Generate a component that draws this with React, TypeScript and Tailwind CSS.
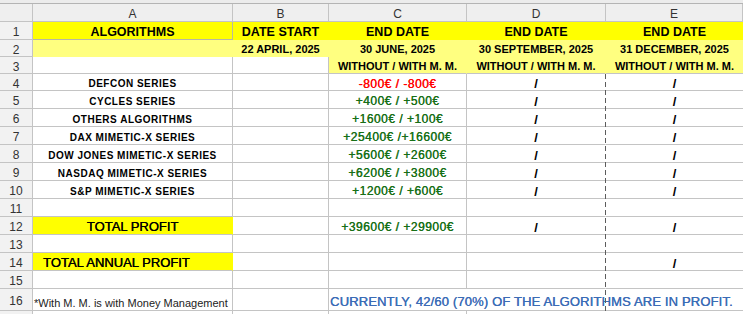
import React from "react";

type Algo = { name: string; value: string; loss?: boolean };

const algos: Algo[] = [
  { name: "DEFCON SERIES", value: "-800€ / -800€", loss: true },
  { name: "CYCLES SERIES", value: "+400€ / +500€" },
  { name: "OTHERS ALGORITHMS", value: "+1600€ / +100€" },
  { name: "DAX MIMETIC-X SERIES", value: "+25400€ /+16600€" },
  { name: "DOW JONES MIMETIC-X SERIES", value: "+5600€ / +2600€" },
  { name: "NASDAQ MIMETIC-X SERIES", value: "+6200€ / +3800€" },
  { name: "S&P MIMETIC-X SERIES", value: "+1200€ / +600€" },
];

function RowNum({ n, h }: { n: number; h: string }) {
  return (
    <div className={`${h} flex items-center justify-center border-r border-b border-[#c4c4c4] bg-[#f2f2f2] pt-[3px] text-[12px] text-[#333]`}>
      {n}
    </div>
  );
}

function Cell({ h, className = "", children }: { h: string; className?: string; children?: React.ReactNode }) {
  return <div className={`${h} flex items-center justify-center pt-[3px] ${className}`}>{children}</div>;
}

function Slash() {
  return <span className="text-[13px] font-bold leading-none text-black">/</span>;
}

const grid = "border-r border-b border-[#c4c4c4]";
const gridD = "border-r border-b border-[#c4c4c4] border-r-transparent";
const money = "text-[12px] tracking-[0.5px] [text-shadow:0.35px_0_0_currentColor]";

export default function App() {
  return (
    <div className="relative h-[314px] w-[743px] overflow-hidden bg-white font-['Liberation_Sans',Arial,sans-serif] text-black">
      <div className="h-[4px] border-b border-[#b4b4b4] bg-[#ececec]" />

      <div className="grid grid-cols-[33px_200px_96px_138px_139px_1fr]">
        {/* column letters */}
        <div className="h-[18px] border-r border-b border-[#c4c4c4] bg-[#efefef]" />
        {["A", "B", "C", "D", "E"].map((c) => (
          <div key={c} className="flex h-[18px] items-center justify-center border-r border-b border-[#c4c4c4] bg-[#efefef] pt-[3px] text-[12px] text-[#333]">
            {c}
          </div>
        ))}

        {/* row 1 */}
        <RowNum n={1} h="h-[18px]" />
        <Cell h="h-[18px]" className="border-r border-b border-[#b8b8a0] bg-[#ffff00] text-[12.5px] font-bold">ALGORITHMS</Cell>
        <Cell h="h-[18px]" className="border-r border-b border-[#ffff00] bg-[#ffff00] text-[12.5px] font-bold">DATE START</Cell>
        <Cell h="h-[18px]" className="border-r border-b border-[#ffff00] bg-[#ffff00] text-[12.5px] font-bold">END DATE</Cell>
        <Cell h="h-[18px]" className="border-r border-b border-[#ffff00] bg-[#ffff00] text-[12.5px] font-bold">END DATE</Cell>
        <Cell h="h-[18px]" className="border-b border-[#ffff00] bg-[#ffff00] text-[12.5px] font-bold">END DATE</Cell>

        {/* row 2 */}
        <RowNum n={2} h="h-[17px]" />
        <Cell h="h-[17px]" className="border-r border-b border-[#ffff80] bg-[#ffff80]" />
        <Cell h="h-[17px]" className="border-r border-b border-[#ffff80] bg-[#ffff80] text-[11px] font-bold">22 APRIL, 2025</Cell>
        <Cell h="h-[17px]" className="border-r border-b border-[#ffff80] bg-[#ffff80] text-[11px] font-bold">30 JUNE, 2025</Cell>
        <Cell h="h-[17px]" className="border-r border-b border-[#ffff80] bg-[#ffff80] text-[11px] font-bold">30 SEPTEMBER, 2025</Cell>
        <Cell h="h-[17px]" className="border-b border-[#ffff80] bg-[#ffff80] text-[11px] font-bold">31 DECEMBER, 2025</Cell>

        {/* row 3 */}
        <RowNum n={3} h="h-[17px]" />
        <Cell h="h-[17px]" className={grid} />
        <Cell h="h-[17px]" className={grid} />
        <Cell h="h-[17px]" className="border-r border-b border-[#c4c4c4] border-r-[#ffff80] bg-[#ffff80] text-[11px] font-bold">WITHOUT / WITH M. M.</Cell>
        <Cell h="h-[17px]" className="border-r border-b border-[#c4c4c4] border-r-[#ffff80] bg-[#ffff80] text-[11px] font-bold">WITHOUT / WITH M. M.</Cell>
        <Cell h="h-[17px]" className="border-b border-[#c4c4c4] bg-[#ffff80] text-[11px] font-bold">WITHOUT / WITH M. M.</Cell>

        {/* rows 4-10 */}
        {algos.map((a, i) => {
          const h = i === 0 ? "h-[17px]" : "h-[18px]";
          return (
            <React.Fragment key={a.name}>
              <RowNum n={i + 4} h={h} />
              <Cell h={h} className={`${grid} text-[10px] font-bold tracking-[0.5px]`}>{a.name}</Cell>
              <Cell h={h} className={grid} />
              <Cell h={h} className={`${grid} ${money} ${a.loss ? "text-[#ff0000]" : "text-[#177017]"}`}>{a.value}</Cell>
              <Cell h={h} className={gridD}><Slash /></Cell>
              <Cell h={h} className="border-b border-[#c4c4c4]"><Slash /></Cell>
            </React.Fragment>
          );
        })}

        {/* row 11 */}
        <RowNum n={11} h="h-[18px]" />
        <Cell h="h-[18px]" className={grid} />
        <Cell h="h-[18px]" className={grid} />
        <Cell h="h-[18px]" className={grid} />
        <Cell h="h-[18px]" className={gridD} />
        <Cell h="h-[18px]" className="border-b border-[#c4c4c4]" />

        {/* row 12 */}
        <RowNum n={12} h="h-[18px]" />
        <Cell h="h-[18px]" className="border-r border-b border-[#c4c4c4] border-r-[#ffff00] bg-[#ffff00] text-[13px] [text-shadow:0.35px_0_0_currentColor]">TOTAL PROFIT</Cell>
        <Cell h="h-[18px]" className={grid} />
        <Cell h="h-[18px]" className={`${grid} ${money} text-[#177017]`}>+39600€ / +29900€</Cell>
        <Cell h="h-[18px]" className={gridD}><Slash /></Cell>
        <Cell h="h-[18px]" className="border-b border-[#c4c4c4]"><Slash /></Cell>

        {/* row 13 */}
        <RowNum n={13} h="h-[18px]" />
        <Cell h="h-[18px]" className={grid} />
        <Cell h="h-[18px]" className={grid} />
        <Cell h="h-[18px]" className={grid} />
        <Cell h="h-[18px]" className={gridD} />
        <Cell h="h-[18px]" className="border-b border-[#c4c4c4]" />

        {/* row 14 */}
        <RowNum n={14} h="h-[18px]" />
        <Cell h="h-[18px]" className="justify-start border-r border-b border-[#c4c4c4] border-r-[#ffff00] bg-[#ffff00] pl-[10px] text-[13px] [text-shadow:0.35px_0_0_currentColor]">TOTAL ANNUAL PROFIT</Cell>
        <Cell h="h-[18px]" className={grid} />
        <Cell h="h-[18px]" className={grid} />
        <Cell h="h-[18px]" className={gridD} />
        <Cell h="h-[18px]" className="border-b border-[#c4c4c4]"><Slash /></Cell>

        {/* row 15 */}
        <RowNum n={15} h="h-[18px]" />
        <Cell h="h-[18px]" className={grid} />
        <Cell h="h-[18px]" className={grid} />
        <Cell h="h-[18px]" className={grid} />
        <Cell h="h-[18px]" className={gridD} />
        <Cell h="h-[18px]" className="border-b border-[#c4c4c4]" />

        {/* row 16 */}
        <RowNum n={16} h="h-[22px]" />
        <div className={`${grid} flex h-[22px] items-end pb-0 pl-[1px] text-[11px] leading-[13px] text-[#222]`}>
          *With M. M. is with Money Management
        </div>
        <div className={`${grid} h-[22px]`} />
        <div className="flex h-[22px] items-end overflow-visible whitespace-nowrap border-b border-[#c4c4c4] pb-[1px] pl-[1px] text-[13px] leading-[15px] tracking-[0.15px] text-[#3b6cb6] [text-shadow:0.35px_0_0_currentColor]">
          CURRENTLY, 42/60 (70%) OF THE ALGORITHMS ARE IN PROFIT.
        </div>
        <div className="h-[22px] border-b border-[#c4c4c4]" />
        <div className="h-[22px] border-b border-[#c4c4c4]" />

        <div className="h-[4px] border-r border-[#c4c4c4] bg-[#f2f2f2]" />
        <div className="h-[4px] border-r border-[#c4c4c4]" />
        <div className="h-[4px] border-r border-[#c4c4c4]" />
        <div className="h-[4px] border-r border-[#c4c4c4]" />
        <div className="h-[4px]" />
        <div className="h-[4px]" />
      </div>

      {/* page break marker between D and E */}
      <div className="absolute left-[605px] top-[74px] h-[240px] w-px bg-[repeating-linear-gradient(to_bottom,#5c5c5c_0px,#5c5c5c_5px,transparent_5px,transparent_8px)]" />
    </div>
  );
}
